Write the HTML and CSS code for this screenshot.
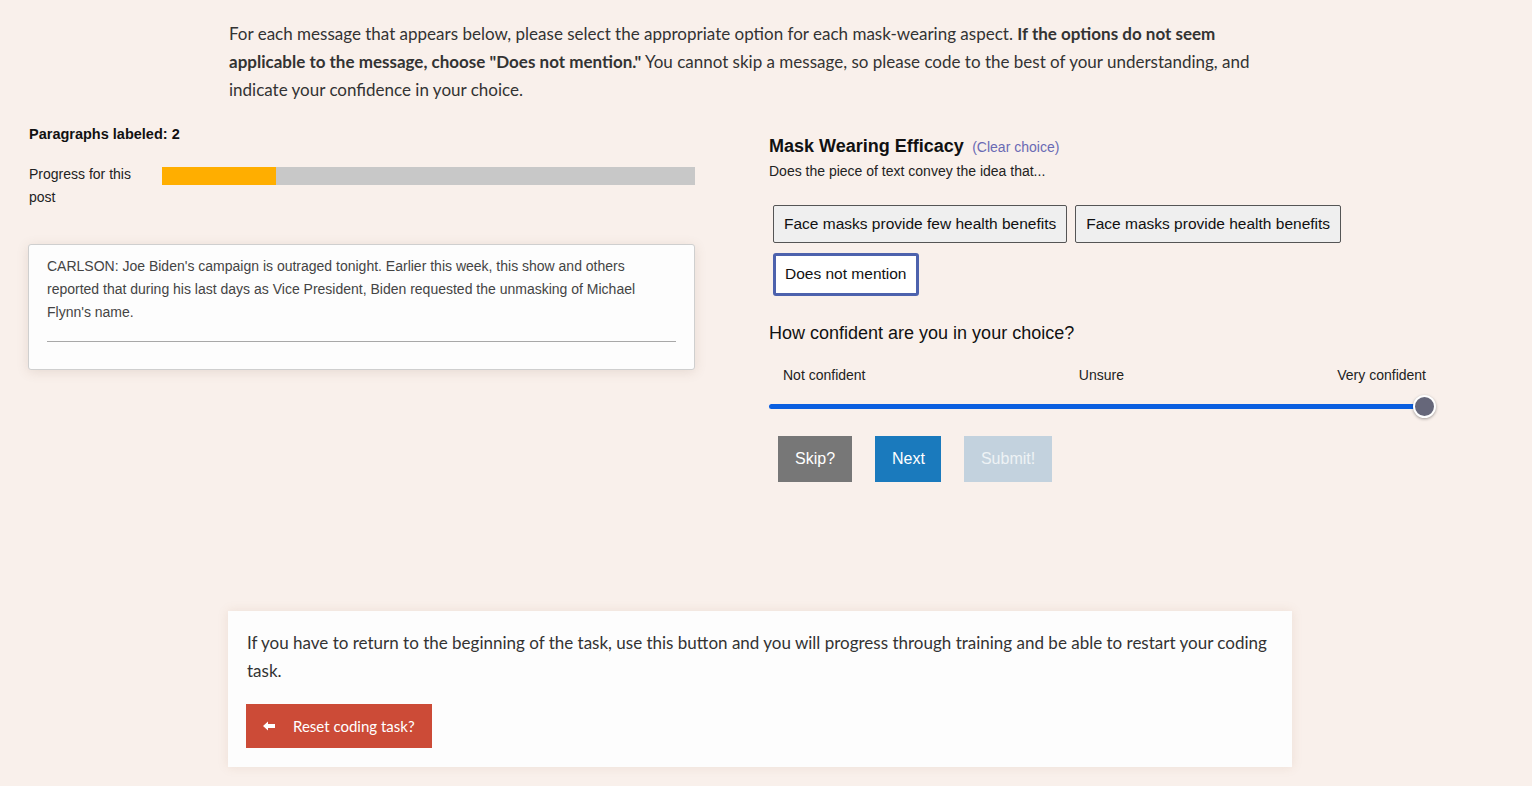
FILE: index.html
```html
<!DOCTYPE html>
<html lang="en">
<head>
<meta charset="utf-8">
<title>Coding task</title>
<link rel="stylesheet" href="styles.css">
</head>
<body>
<p class="intro">For each message that appears below, please select the appropriate option for each mask-wearing aspect. <strong>If the options do not seem applicable to the message, choose "Does not mention."</strong> You cannot skip a message, so please code to the best of your understanding, and indicate your confidence in your choice.</p>

<div class="main">
  <div class="left">
    <div class="labeled">Paragraphs labeled: 2</div>
    <div class="progress-row">
      <div class="progress-label">Progress for this post</div>
      <div class="progress-bar"><div class="progress-fill" style="width:21.4%"></div></div>
    </div>
    <div class="text-card">
      <p>CARLSON: Joe Biden's campaign is outraged tonight. Earlier this week, this show and others reported that during his last days as Vice President, Biden requested the unmasking of Michael Flynn's name.</p>
      <hr class="rule">
    </div>
  </div>

  <div class="right">
    <div class="q-head">
      <span class="q-title">Mask Wearing Efficacy</span>
      <span class="q-clear">(Clear choice)</span>
    </div>
    <div class="q-sub">Does the piece of text convey the idea that...</div>
    <div class="options">
      <button class="opt">Face masks provide few health benefits</button>
      <button class="opt">Face masks provide health benefits</button>
      <button class="opt opt-selected">Does not mention</button>
    </div>
    <div class="conf-q">How confident are you in your choice?</div>
    <div class="scale-labels">
      <span>Not confident</span>
      <span>Unsure</span>
      <span>Very confident</span>
    </div>
    <div class="slider">
      <div class="track"></div>
      <div class="thumb"></div>
    </div>
    <div class="actions">
      <button class="act act-skip">Skip?</button>
      <button class="act act-next">Next</button>
      <button class="act act-submit">Submit!</button>
    </div>
  </div>
</div>

<div class="reset-card">
  <p>If you have to return to the beginning of the task, use this button and you will progress through training and be able to restart your coding task.</p>
  <button class="reset-btn">
    <svg class="arrow" width="12" height="10" viewBox="0 0 12 10"><path d="M0 5 L5 0.5 L5 3 L12 3 L12 7 L5 7 L5 9.5 Z" fill="#fff"/></svg>
    <span>Reset coding task?</span>
  </button>
</div>
</body>
</html>
```

FILE: styles.css
```css
html, body {
  margin: 0;
  padding: 0;
  background: #f9f0eb;
}
body {
  font-family: "Liberation Sans", Arial, sans-serif;
  color: #111;
  width: 1532px;
  min-height: 786px;
}
.intro {
  margin: 20px 0 0 228px;
  width: 1050px;
  padding-left: 1px;
  font-family: Lato, "Open Sans", sans-serif;
  font-size: 17px;
  line-height: 28px;
  color: #333;
}
.intro strong {
  font-weight: 700;
}
.main {
  display: flex;
  align-items: flex-start;
}
.left {
  width: 667px;
  margin-left: 28px;
}
.labeled {
  margin-top: 22px;
  padding-left: 1px;
  font-size: 14.5px;
  font-weight: 700;
  line-height: 16px;
}
.progress-row {
  display: flex;
  margin-top: 21px;
  padding-left: 1px;
}
.progress-label {
  width: 116px;
  margin-right: 17px;
  font-size: 14px;
  line-height: 23px;
  color: #222;
}
.progress-bar {
  flex: 1;
  height: 18px;
  margin-top: 4px;
  background: #c8c8c8;
  display: flex;
}
.progress-fill {
  background: #ffae00;
  height: 100%;
}
.text-card {
  margin-top: 35px;
  background: #fdfdfd;
  border: 1px solid #cfcfcf;
  border-radius: 3px;
  box-shadow: 0 2px 12px rgba(120, 90, 70, 0.15);
  padding: 10px 18px 27px;
}
.text-card p {
  margin: 0;
  font-size: 14px;
  line-height: 23px;
  color: #444;
}
.rule {
  margin: 17px 0 0;
  border: 0;
  border-top: 1px solid #a8a8a8;
  height: 0;
}
.right {
  width: 667px;
  margin-left: 74px;
  margin-top: 31px;
}
.q-head {
  line-height: 22px;
}
.q-title {
  font-size: 18px;
  font-weight: 700;
}
.q-clear {
  margin-left: 4px;
  font-size: 14px;
  color: #6a6ab4;
}
.q-sub {
  margin-top: 5px;
  font-size: 14px;
  line-height: 17px;
  color: #222;
}
.options {
  display: flex;
  flex-wrap: wrap;
  gap: 10px 8px;
  margin: 25px 0 0 4px;
}
.opt {
  font-family: "Liberation Sans", Arial, sans-serif;
  font-size: 15.5px;
  line-height: 18px;
  padding: 9px 10px;
  color: #111;
  background: #efefef;
  border: 1px solid #555;
  border-radius: 2px;
}
.opt-selected {
  background: #fff;
  border: 3px solid #4d62ad;
  border-radius: 3px;
  padding: 9px 9px 10px;
}
.conf-q {
  margin-top: 26px;
  font-size: 18px;
  line-height: 22px;
}
.scale-labels {
  display: flex;
  justify-content: space-between;
  margin: 23px 10px 0 14px;
  font-size: 14px;
  line-height: 17px;
  color: #222;
}
.slider {
  position: relative;
  margin-top: 11px;
  height: 23px;
}
.track {
  position: absolute;
  left: 0;
  right: 10px;
  top: 9px;
  height: 5px;
  border-radius: 3px;
  background: #0b5fe0;
}
.thumb {
  position: absolute;
  right: 0;
  top: 0;
  width: 19px;
  height: 19px;
  border-radius: 50%;
  background: #66677a;
  border: 2px solid #fff;
  box-shadow: 0 1px 3px rgba(0, 0, 0, 0.35);
}
.actions {
  display: flex;
  gap: 23px;
  margin: 18px 0 0 9px;
}
.act {
  font-family: "Liberation Sans", Arial, sans-serif;
  font-size: 16px;
  line-height: 18px;
  padding: 14px 17px;
  border: 0;
  border-radius: 0;
  color: #fff;
}
.act-skip { background: #777; }
.act-next { background: #1a7abd; padding: 14px 16px 14px 17px; }
.act-submit { background: #c3d2de; color: #eef2f5; padding: 14px 17px; }
.reset-card {
  margin: 129px 0 0 228px;
  width: 1064px;
  box-sizing: border-box;
  background: #fdfdfd;
  box-shadow: 0 0 10px rgba(170, 120, 90, 0.15);
  padding: 18px 19px 19px 18px;
  font-family: Lato, "Open Sans", sans-serif;
}
.reset-card p {
  margin: 0 0 0 1px;
  font-size: 17px;
  line-height: 28px;
  color: #333;
}
.reset-btn {
  display: flex;
  align-items: center;
  margin-top: 19px;
  height: 44px;
  padding: 0 17px;
  background: #cc4b37;
  border: 0;
  color: #fff;
  font-family: Lato, "Open Sans", sans-serif;
  font-size: 15px;
}
.arrow {
  margin-right: 18px;
}
```
